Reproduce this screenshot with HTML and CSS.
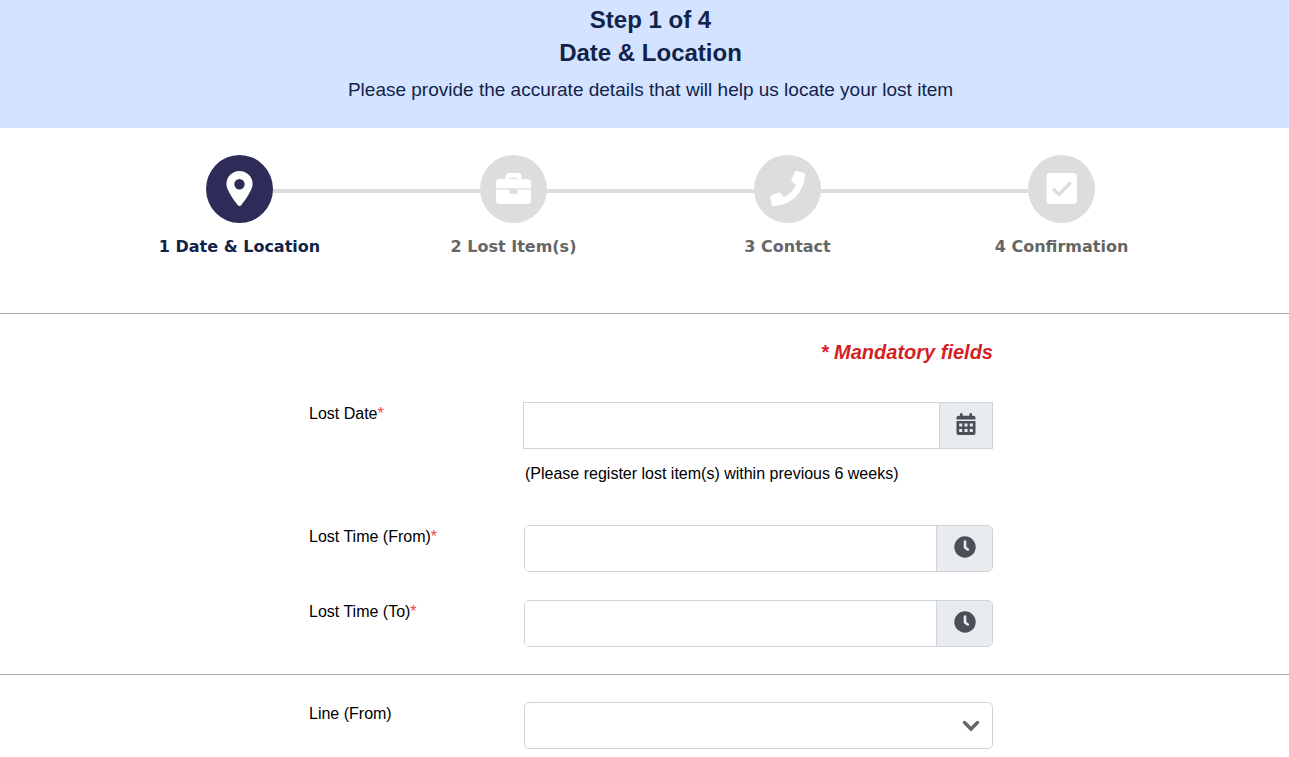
FILE: index.html
```
<!DOCTYPE html>
<html lang="en">
<head>
<meta charset="utf-8">
<meta name="viewport" content="width=device-width, initial-scale=1">
<title>Lost item: Date &amp; Location</title>
<link rel="stylesheet" href="styles.css">
</head>
<body>
<header class="banner">
  <h1 class="banner-title">Step 1 of 4<br>Date &amp; Location</h1>
  <p class="banner-text">Please provide the accurate details that will help us locate your lost item</p>
</header>

<nav class="progress" aria-label="Progress">
  <ol class="steps">
    <li class="step step-active" aria-current="step">
      <span class="step-circle">
        <svg class="step-icon" viewBox="0 0 35 35" aria-hidden="true"><path fill="currentColor" fill-rule="evenodd" d="M17.500 0A13.100 13.100 0 0 1 30.600 13.100C30.600 19 23 29.600 19.200 34.200Q17.500 35.800 15.800 34.200C12 29.600 4.400 19 4.400 13.100A13.100 13.100 0 0 1 17.500 0ZM17.500 8a5.200 5.200 0 1 0 0 10.400a5.200 5.200 0 0 0 0-10.400Z"/></svg>
      </span>
      <span class="step-label">1 Date &amp; Location</span>
    </li>
    <li class="step">
      <span class="step-circle">
        <svg class="step-icon" viewBox="0 0 35 35" aria-hidden="true"><path fill="currentColor" fill-rule="evenodd" d="M9.500 8V5.500A3.500 3.500 0 0 1 13 2h9A3.500 3.500 0 0 1 25.500 5.500V8h6A3.500 3.500 0 0 1 35 11.500V17.200H0v-5.700A3.500 3.500 0 0 1 3.500 8ZM13.500 6.800V8h8V6.800ZM0 18.600h13.500v2.900q0 1.300 1.300 1.300h5.400q1.300 0 1.300-1.300v-2.900H35V29.500A3.500 3.500 0 0 1 31.500 33h-28A3.500 3.500 0 0 1 0 29.500Z"/></svg>
      </span>
      <span class="step-label">2 Lost Item(s)</span>
    </li>
    <li class="step">
      <span class="step-circle">
        <svg class="step-icon" viewBox="0 0 512 512" aria-hidden="true"><path fill="currentColor" d="M493.400 24.600l-104-24c-11.300-2.600-22.900 3.300-27.500 13.900l-48 112c-4.200 9.800-1.400 21.300 6.900 28l60.600 49.600c-36 76.700-98.900 140.500-177.200 177.200l-49.600-60.600c-6.800-8.300-18.200-11.100-28-6.900l-112 48C3.900 366.500-2 378.100.6 389.400l24 104C27.100 504.200 36.700 512 48 512c256.100 0 464-207.500 464-464 0-11.200-7.700-20.900-18.600-23.400z"/></svg>
      </span>
      <span class="step-label">3 Contact</span>
    </li>
    <li class="step">
      <span class="step-circle">
        <svg class="step-icon" viewBox="0 0 35 35" aria-hidden="true"><rect x="2.500" y="2" width="30.500" height="31" rx="3.500" fill="currentColor"/><path d="M10 18.800l5 4.700L25.800 12.500" fill="none" stroke="#ddd" stroke-width="3.400" stroke-linecap="round" stroke-linejoin="round"/></svg>
      </span>
      <span class="step-label">4 Confirmation</span>
    </li>
  </ol>
</nav>

<form class="report">
  <section class="section">
    <div class="fields">
      <p class="mandatory">* Mandatory fields</p>
      <div class="row row-date">
        <label class="label" for="lost-date">Lost Date<span class="required">*</span></label>
        <div class="control">
          <div class="group group-date">
            <input class="input" id="lost-date" type="text" aria-describedby="date-hint">
            <button class="addon" type="button" aria-label="Choose date">
              <svg class="addon-icon" viewBox="0 0 22 22" aria-hidden="true"><path fill="currentColor" fill-rule="evenodd" d="M5 1.300a1.300 1.300 0 0 1 2.600 0V2.700h6.800V1.300a1.300 1.300 0 0 1 2.600 0V2.700h1.500a2 2 0 0 1 2 2V6.500h-19V4.700a2 2 0 0 1 2-2H5ZM1.500 8h19v12a2 2 0 0 1-2 2h-15a2 2 0 0 1-2-2ZM4.200 10.500v3h3v-3ZM9.500 10.500v3h3v-3ZM14.800 10.500v3h3v-3ZM4.200 16v3h3v-3ZM9.500 16v3h3v-3ZM14.800 16v3h3v-3Z"/></svg>
            </button>
          </div>
          <p class="hint" id="date-hint">(Please register lost item(s) within previous 6 weeks)</p>
        </div>
      </div>
      <div class="row">
        <label class="label" for="time-from">Lost Time (From)<span class="required">*</span></label>
        <div class="control">
          <div class="group">
            <input class="input" id="time-from" type="text">
            <button class="addon" type="button" aria-label="Choose start time">
              <svg class="addon-icon" viewBox="0 0 22 22" aria-hidden="true"><circle cx="11" cy="11" r="10.700" fill="currentColor"/><path d="M11 5.500V11.500L13.800 13.500" fill="none" stroke="#e9ecef" stroke-width="2.600" stroke-linecap="round" stroke-linejoin="round"/></svg>
            </button>
          </div>
        </div>
      </div>
      <div class="row">
        <label class="label" for="time-to">Lost Time (To)<span class="required">*</span></label>
        <div class="control">
          <div class="group">
            <input class="input" id="time-to" type="text">
            <button class="addon" type="button" aria-label="Choose end time">
              <svg class="addon-icon" viewBox="0 0 22 22" aria-hidden="true"><circle cx="11" cy="11" r="10.700" fill="currentColor"/><path d="M11 5.500V11.500L13.800 13.500" fill="none" stroke="#e9ecef" stroke-width="2.600" stroke-linecap="round" stroke-linejoin="round"/></svg>
            </button>
          </div>
        </div>
      </div>
    </div>
  </section>
  <section class="section">
    <div class="fields">
      <div class="row">
        <label class="label" for="line-from">Line (From)</label>
        <div class="control select-wrap">
          <select class="select" id="line-from"><option value=""></option></select>
          <svg class="chevron" viewBox="0 0 18 12" aria-hidden="true"><path d="M2.500 2.500L9 9L15.500 2.500" fill="none" stroke="currentColor" stroke-width="3.400" stroke-linecap="round"/></svg>
        </div>
      </div>
    </div>
  </section>
</form>
</body>
</html>
```
FILE: styles.css
```
* {
  box-sizing: border-box;
}

body {
  margin: 0;
  background: #fff;
  color: #000;
  font: 16px/24px "Liberation Sans", Arial, sans-serif;
}

h1,
p,
ol {
  margin: 0;
  padding: 0;
}

.banner {
  padding: 3px 0 24px 12px;
  background: #d4e3ff;
  color: #12234a;
  text-align: center;
}

.banner-title {
  font-size: 24px;
  line-height: 33px;
}

.banner-text {
  margin-top: 7px;
  font-size: 19px;
  line-height: 28px;
}

.progress {
  padding: 27px 0 54px 12px;
}

.steps {
  display: grid;
  grid-template-columns: repeat(4, 1fr);
  max-width: 1096px;
  margin: 0 auto;
  list-style: none;
}

.step {
  position: relative;
  display: flex;
  flex-direction: column;
  align-items: center;
  gap: 12px;
  color: #666;
}

.step + .step::before {
  content: "";
  position: absolute;
  z-index: -1;
  top: 34px;
  right: 50%;
  width: 100%;
  height: 4px;
  background: #ddd;
}

.step-circle {
  display: grid;
  place-items: center;
  width: 67px;
  height: 68px;
  padding-bottom: 2px;
  border-radius: 50%;
  background: #ddd;
  color: #fff;
}

.step-icon {
  width: 35px;
  height: 35px;
}

.step-label {
  font-family: "Arial Black", "DejaVu Sans", sans-serif;
  font-weight: 900;
  text-align: center;
}

.step-active {
  color: #12234a;
}

.step-active .step-circle {
  background: #2d2c58;
}

.section {
  padding: 27px 0 27px 12px;
  border-top: 1px solid #a9a9a9;
}

.fields {
  display: flex;
  flex-direction: column;
  gap: 28px;
  max-width: 685px;
  margin: 0 auto;
}

.mandatory {
  margin-bottom: 11px;
  color: #d41f26;
  font-size: 20px;
  font-style: italic;
  font-weight: bold;
  line-height: 22px;
  text-align: right;
}

.row {
  display: grid;
  grid-template-columns: 216px 1fr;
}

.row-date {
  grid-template-columns: 215px 1fr;
  margin-bottom: 11px;
}

.label {
  justify-self: start;
  align-self: start;
  padding-left: 1px;
}

.required {
  color: #f0444c;
}

.group {
  display: grid;
  grid-template-columns: 1fr 56px;
  height: 47px;
  overflow: hidden;
  border: 1px solid #ced4da;
  border-radius: 5px;
}

.group-date {
  grid-template-columns: 1fr 53px;
  border-radius: 0;
}

.input {
  width: 100%;
  min-width: 0;
  padding: 0 12px;
  border: 0;
  background: #fff;
  font: inherit;
}

.addon {
  display: grid;
  place-items: center;
  padding: 0 0 4px;
  border: 0;
  border-left: 1px solid #ced4da;
  background: #e9ecef;
  color: #495057;
}

.addon-icon {
  width: 22px;
  height: 22px;
}

.hint {
  margin-top: 13px;
  padding-left: 2px;
}

.select-wrap {
  position: relative;
}

.select {
  display: block;
  width: 100%;
  height: 47px;
  padding: 0 40px 0 12px;
  border: 1px solid #ced4da;
  border-radius: 5px;
  background: #fff;
  font: inherit;
  appearance: none;
}

.chevron {
  position: absolute;
  top: 18px;
  right: 13px;
  width: 18px;
  height: 12px;
  color: #666;
  pointer-events: none;
}
```
